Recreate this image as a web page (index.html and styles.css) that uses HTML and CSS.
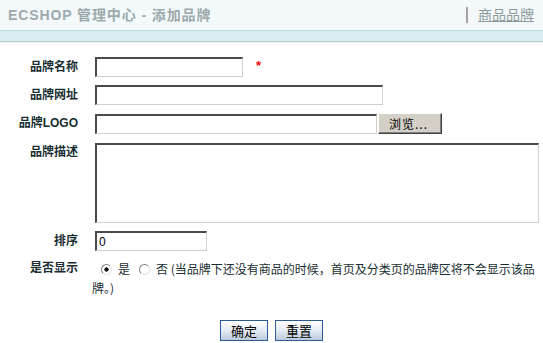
FILE: index.html
```html
<!DOCTYPE html>
<html>
<head>
    <meta charset="utf-8">
    <title>ECSHOP 管理中心 - 添加品牌</title>
    <link rel="stylesheet" href="styles.css">
</head>
<body>
    <div class="page-head">
        <h1>ECSHOP 管理中心 - 添加品牌</h1>
        <span class="action-span"><a href="#">商品品牌</a></span>
    </div>
    <div class="head-band"></div>

    <form class="main-form" name="theForm">
        <div class="row">
            <label class="label" for="brand_name">品牌名称</label>
            <div class="field">
                <input type="text" class="text w-name" name="brand_name" id="brand_name">
                <span class="require-field">*</span>
            </div>
        </div>
        <div class="row">
            <label class="label" for="site_url">品牌网址</label>
            <div class="field">
                <input type="text" class="text w-url" name="site_url" id="site_url">
            </div>
        </div>
        <div class="row">
            <label class="label" for="brand_logo">品牌LOGO</label>
            <div class="field">
                <input type="text" class="text w-logo" name="brand_logo" id="brand_logo"><button type="button" class="browse">浏览...</button>
            </div>
        </div>
        <div class="row">
            <label class="label" for="brand_desc">品牌描述</label>
            <div class="field">
                <textarea class="desc" name="brand_desc" id="brand_desc"></textarea>
            </div>
        </div>
        <div class="row">
            <label class="label" for="sort_order">排序</label>
            <div class="field">
                <input type="text" class="text w-sort" name="sort_order" id="sort_order" value="0">
            </div>
        </div>
        <div class="row row-text">
            <span class="label">是否显示</span>
            <div class="field notice"><input type="radio" name="is_show" value="1" id="show_yes" checked><label for="show_yes">是</label><input type="radio" name="is_show" value="0" id="show_no"><label for="show_no">否</label><span class="hint"> (当品牌下还没有商品的时候，首页及分类页的品牌区将不会显示该品牌。)</span></div>
        </div>
        <div class="actions">
            <input type="submit" class="button" value="确定">
            <input type="reset" class="button" value="重置">
        </div>
    </form>
</body>
</html>
```

FILE: styles.css
```css
body
{
    margin: 0;
    font-family: "Liberation Sans", "Noto Sans CJK SC", sans-serif;
    font-size: 12px;
    color: #000;
    background: #fff;
}
.page-head
{
    height: 30px;
    background: #f3f8fa;
    display: flex;
    justify-content: space-between;
    align-items: center;
    padding: 0 9px 0 8px;
}
.page-head h1
{
    margin: 0;
    font-size: 14px;
    font-weight: bold;
    color: #9caaad;
    letter-spacing: 0.9px;
    line-height: 28px;
}
.action-span
{
    display: flex;
    align-items: center;
    border-left: 2px solid #a3a3a3;
    height: 16px;
    padding-left: 10px;
    margin-top: -1px;
}
.action-span a
{
    color: #8e9a9c;
    font-size: 14px;
    line-height: 16px;
    text-decoration: underline;
}
.head-band
{
    height: 10px;
    background: #dcedf1;
    border-top: 1px solid #bcdce4;
    border-bottom: 1px solid #b6ccd3;
    box-shadow: 0 1px 0 #eef6f8;
}
.main-form
{
    display: flex;
    flex-direction: column;
    gap: 8px;
    padding: 15px 2px 0 0;
}
.row
{
    display: grid;
    grid-template-columns: 78px 1fr;
    column-gap: 14px;
    align-items: start;
}
.label
{
    text-align: right;
    font-weight: bold;
    color: #192e32;
    line-height: 20px;
}
.field
{
    display: flex;
    align-items: center;
    min-height: 20px;
}
.text
{
    box-sizing: border-box;
    height: 20px;
    margin: 0 0 0 3px;
    padding: 1px 2px;
    font: 12px "Liberation Sans", "Noto Sans CJK SC", sans-serif;
    background: #fff;
    border-style: solid;
    border-width: 2px 1px 1px 2px;
    border-color: #4a4a4a #d4d0c8 #d4d0c8 #4a4a4a;
    outline: none;
}
.w-name { width: 148px; }
.w-url { width: 288px; }
.w-logo { width: 282px; }
.w-sort { width: 112px; }
.require-field
{
    color: #ff0000;
    font-size: 13px;
    font-weight: bold;
    margin-left: 13px;
    margin-top: -4px;
}
.browse
{
    box-sizing: border-box;
    width: 64px;
    height: 21px;
    margin-left: 1px;
    padding: 0 0 0 10px;
    text-align: left;
    font: 12px "Noto Sans CJK SC", sans-serif;
    letter-spacing: 1px;
    color: #000;
    background: #d4d0c8;
    border: 1px solid;
    border-color: #fff #404040 #404040 #fff;
    box-shadow: inset -1px -1px 0 #808080;
}
.desc
{
    box-sizing: border-box;
    width: 444px;
    height: 80px;
    margin: 1px 0 0 3px;
    resize: none;
    background: #fff;
    border-style: solid;
    border-width: 2px 1px 1px 2px;
    border-color: #4a4a4a #d4d0c8 #d4d0c8 #4a4a4a;
    outline: none;
}
.row-text .label,
.notice
{
    line-height: 19px;
}
.notice
{
    display: block;
    font-family: "Noto Sans CJK SC", sans-serif;
    color: #192e32;
}
.notice input[type="radio"]
{
    -webkit-appearance: none;
    appearance: none;
    box-sizing: border-box;
    width: 11px;
    height: 11px;
    margin: 0 6px 0 9px;
    vertical-align: -1px;
    border-radius: 50%;
    border: 1px solid;
    border-color: #808080 #e6e3dc #e6e3dc #808080;
    background: #fff;
}
.notice input[type="radio"]:checked
{
    background: radial-gradient(circle, #000 0, #000 1.8px, #fff 2.4px);
}
.actions
{
    display: flex;
    justify-content: center;
    gap: 7px;
    margin-top: 15px;
    padding-left: 2px;
}
.button
{
    box-sizing: border-box;
    width: 48px;
    height: 21px;
    padding: 0;
    font: 13px "Noto Sans CJK SC", sans-serif;
    color: #000;
    border: 1px solid #2c5a94;
    background: linear-gradient(#ffffff, #e8eef5 45%, #bccbdd);
}
```
